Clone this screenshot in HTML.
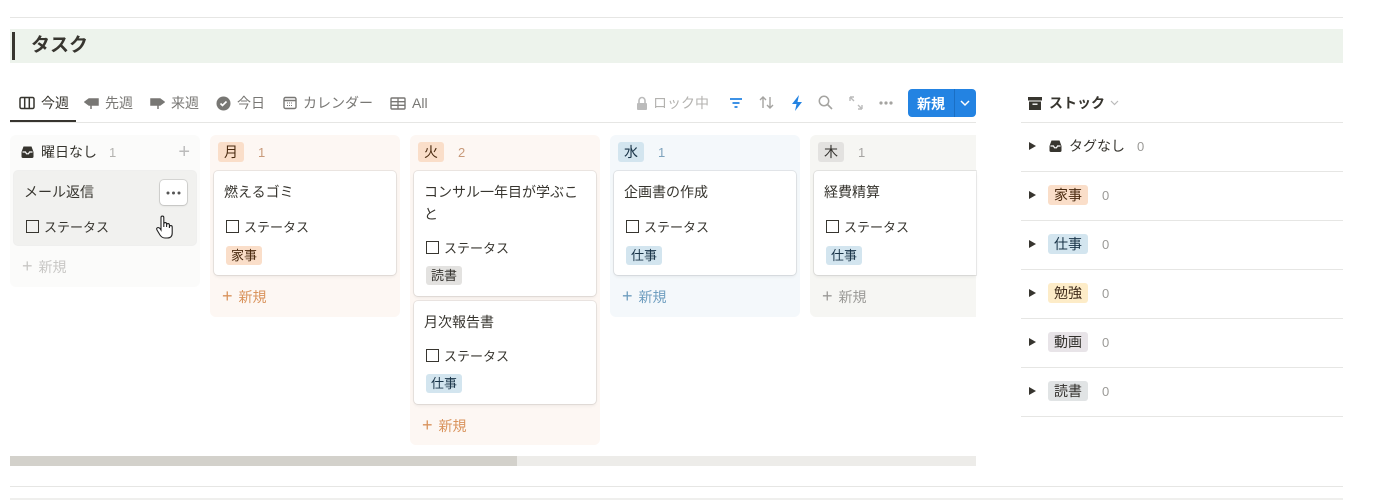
<!DOCTYPE html>
<html><head><meta charset="utf-8"><style>
*{box-sizing:border-box;margin:0;padding:0}
body{width:1386px;height:500px;background:#fff;font-family:"Liberation Sans","Noto Sans CJK JP",sans-serif;color:#37352f;position:relative;overflow:hidden;font-size:14px}
.a{position:absolute}
.hl{position:absolute;height:1px;background:#e6e6e4}
.tab{position:absolute;top:94px;font-size:14px;color:#787774;display:flex;align-items:center;gap:6px;height:18px}
.col{position:absolute;top:135px;width:190px;border-radius:6px}
.ch{position:absolute;top:142px;height:20px;display:flex;align-items:center;font-size:14px}
.pill{padding:0 6px;border-radius:3px;height:20px;line-height:20px;font-size:14px}
.card{position:absolute;left:4px;width:182px;background:#fff;border-radius:4px;box-shadow:0 0 0 1px rgba(15,15,15,.08),0 2px 3px rgba(15,15,15,.06)}
.ct{position:absolute;left:10px;top:10px;font-size:14px;line-height:22px;width:160px}
.st{position:absolute;left:12px;font-size:13px;display:flex;align-items:center;gap:5px}
.cb{width:13px;height:13px;border:1.5px solid #37352f;display:inline-block}
.tag{position:absolute;left:12px;font-size:13px;height:19px;line-height:19px;padding:0 5px;border-radius:3px}
.nw{position:absolute;left:12px;font-size:14px;display:flex;align-items:center;gap:6px}
.row{position:absolute;left:1029px;height:20px;display:flex;align-items:center;font-size:14px}
.tri{width:0;height:0;border-left:7px solid #37352f;border-top:4.5px solid transparent;border-bottom:4.5px solid transparent;margin-right:12px}
.rt{padding:0 6px;height:20px;line-height:20px;border-radius:3px;font-size:14px}
.n0{color:#9b9a97;margin-left:14px;font-size:13px}
</style></head><body>
<div class="hl" style="left:10px;top:17px;width:1333px"></div>
<div class="a" style="left:10px;top:29px;width:1333px;height:34px;background:#edf3ec"></div>
<div class="a" style="left:12px;top:32px;width:3px;height:28px;background:#37352f"></div>
<div class="a" style="left:31px;top:33px;font-size:19px;font-weight:bold;line-height:26px">タスク</div>

<div class="tab" style="left:19px;color:#37352f"><svg width="16" height="14" viewBox="0 0 16 14"><rect x="1" y="1.5" width="14" height="11" rx="1.5" fill="none" stroke="#37352f" stroke-width="1.5"/><path d="M5.7 1.5v11M10.3 1.5v11" stroke="#37352f" stroke-width="1.5"/></svg>今週</div>
<div class="a" style="left:10px;top:120px;width:66px;height:2px;background:#37352f"></div>
<div class="tab" style="left:84px"><svg width="15" height="14" viewBox="0 0 15 14"><path d="M1 6L5 3h9v6H5z M7 9v4" fill="#787774" stroke="#787774" stroke-width="1.5"/></svg>先週</div>
<div class="tab" style="left:150px"><svg width="15" height="14" viewBox="0 0 15 14"><path d="M14 6L10 3H1v6h9z M8 9v4" fill="#787774" stroke="#787774" stroke-width="1.5"/></svg>来週</div>
<div class="tab" style="left:216px"><svg width="15" height="15" viewBox="0 0 15 15"><circle cx="7.5" cy="7.5" r="7" fill="#787774"/><path d="M4.5 7.5l2 2 4-4" stroke="#fff" stroke-width="1.6" fill="none"/></svg>今日</div>
<div class="tab" style="left:283px"><svg width="14" height="14" viewBox="0 0 14 14"><rect x="1" y="1.5" width="12" height="11" rx="1.5" fill="none" stroke="#787774" stroke-width="1.4"/><path d="M1 4.5h12" stroke="#787774" stroke-width="1.5"/><path d="M4 7h6M4 9.5h6" stroke="#787774" stroke-width="1" stroke-dasharray="1 1"/></svg>カレンダー</div>
<div class="tab" style="left:390px"><svg width="16" height="13" viewBox="0 0 16 13"><rect x="1" y="1" width="14" height="11" rx="1" fill="none" stroke="#787774" stroke-width="1.4"/><path d="M1 4.7h14M1 8.3h14M8 1v11" stroke="#787774" stroke-width="1.3"/></svg>All</div>
<div class="hl" style="left:10px;top:122px;width:966px"></div>

<div class="tab" style="left:636px;color:#b3b2af;gap:5px"><svg width="12" height="15" viewBox="0 0 12 15"><path d="M3 7V4.5a3 3 0 016 0V7" fill="none" stroke="#bbb" stroke-width="1.6"/><rect x="1" y="7" width="10" height="7" rx="1" fill="#bbb"/></svg>ロック中</div>
<svg class="a" style="left:729px;top:97px" width="14" height="12" viewBox="0 0 14 12"><path d="M1 2h12M3.5 6h7M5.5 10h3" stroke="#2383e2" stroke-width="1.8"/></svg>
<svg class="a" style="left:759px;top:95px" width="15" height="15" viewBox="0 0 15 15"><path d="M4 13V2M1 5l3-3 3 3M11 2v11M8 10l3 3 3-3" stroke="#a5a4a1" stroke-width="1.4" fill="none"/></svg>
<svg class="a" style="left:791px;top:95px" width="12" height="16" viewBox="0 0 12 16"><path d="M8 0L1 9h4.5L4 16l7-9H6.5z" fill="#2383e2"/></svg>
<svg class="a" style="left:818px;top:95px" width="15" height="15" viewBox="0 0 15 15"><circle cx="6" cy="6" r="4.7" fill="none" stroke="#a5a4a1" stroke-width="1.5"/><path d="M9.5 9.5l4.5 4.5" stroke="#a5a4a1" stroke-width="1.6"/></svg>
<svg class="a" style="left:849px;top:96px" width="14" height="14" viewBox="0 0 14 14"><path d="M1 1l4 4M1 1v4M1 1h4M13 13l-4-4M13 13V9M13 13H9" stroke="#bbb" stroke-width="1.4" fill="none"/></svg>
<svg class="a" style="left:879px;top:101px" width="14" height="4" viewBox="0 0 14 4"><circle cx="2" cy="2" r="1.6" fill="#a5a4a1"/><circle cx="7" cy="2" r="1.6" fill="#a5a4a1"/><circle cx="12" cy="2" r="1.6" fill="#a5a4a1"/></svg>
<div class="a" style="left:908px;top:89px;width:68px;height:28px;background:#2383e2;border-radius:4px;color:#fff;font-size:14px;font-weight:bold"><span class="a" style="left:9px;top:5px">新規</span><div class="a" style="left:46px;top:0;width:1px;height:28px;background:#1a6fc4"></div><svg class="a" style="left:52px;top:11px" width="10" height="7" viewBox="0 0 10 7"><path d="M1 1l4 4 4-4" stroke="#fff" stroke-width="1.5" fill="none"/></svg></div>

<!-- columns -->
<div class="col" style="left:10px;height:152px;background:#fbfbfa"></div>
<div class="ch" style="left:20px;width:170px"><svg width="15" height="14" viewBox="0 0 15 14"><path d="M1.5 7L3.5 1.5h8L13.5 7v4.5q0 1.5-1.5 1.5H3q-1.5 0-1.5-1.5z" fill="#37352f"/><path d="M2.5 7h3l1 1.8h2L9.5 7h3" stroke="#fff" stroke-width="1.2" fill="none"/></svg><span style="margin-left:6px">曜日なし</span><span style="margin-left:12px;color:#b3b2af;font-size:13px">1</span><span style="margin-left:auto;color:#bbb;font-size:20px;font-weight:300">+</span></div>
<div class="card" style="left:14px;top:171px;height:74px;background:#f1f1ef;box-shadow:0 0 0 1px rgba(15,15,15,.05)">
 <div class="ct">メール返信</div>
 <div class="a" style="left:146px;top:9px;width:27px;height:25px;background:#fff;border-radius:4px;box-shadow:0 0 0 1px rgba(15,15,15,.12),0 1px 2px rgba(15,15,15,.1)"><svg class="a" style="left:6px;top:11px" width="15" height="4" viewBox="0 0 15 4"><circle cx="2" cy="2" r="1.5" fill="#555"/><circle cx="7.5" cy="2" r="1.5" fill="#555"/><circle cx="13" cy="2" r="1.5" fill="#555"/></svg></div>
 <div class="st" style="top:46px"><span class="cb"></span>ステータス</div>
 <svg class="a" style="left:142px;top:44px" width="18" height="26" viewBox="0 0 18 26"><path d="M5 2.5a1.4 1.4 0 012.8 0V12v-3a1.4 1.4 0 012.8 0v3-2a1.4 1.4 0 012.8 0v3-1a1.4 1.4 0 012.8 0v6q0 5-5 5H9q-3 0-5-3L1 15q-1-2 1-2.5 1 0 2 1l1 1.5z" fill="#fff" stroke="#222" stroke-width="1.1"/></svg>
</div>
<div class="nw" style="left:22px;top:256px;color:#c8c7c5"><span style="font-size:18px">+</span>新規</div>

<div class="col" style="left:210px;height:182px;background:#fdf7f3"></div>
<div class="ch" style="left:218px"><span class="pill" style="background:#fadec9;color:#49290e">月</span><span style="margin-left:14px;color:#c89a7a;font-size:13px">1</span></div>
<div class="card" style="left:214px;top:171px;height:104px">
 <div class="ct">燃えるゴミ</div>
 <div class="st" style="top:46px"><span class="cb"></span>ステータス</div>
 <div class="tag" style="top:75px;background:#fadec9;color:#49290e">家事</div>
</div>
<div class="nw" style="left:222px;top:286px;color:#d9935c"><span style="font-size:18px">+</span>新規</div>

<div class="col" style="left:410px;height:310px;background:#fdf7f3"></div>
<div class="ch" style="left:418px"><span class="pill" style="background:#fadec9;color:#49290e">火</span><span style="margin-left:14px;color:#c89a7a;font-size:13px">2</span></div>
<div class="card" style="left:414px;top:171px;height:125px">
 <div class="ct">コンサル一年目が学ぶこと</div>
 <div class="st" style="top:67px"><span class="cb"></span>ステータス</div>
 <div class="tag" style="top:95px;background:#e3e2e0;color:#32302c">読書</div>
</div>
<div class="card" style="left:414px;top:301px;height:103px">
 <div class="ct">月次報告書</div>
 <div class="st" style="top:45px"><span class="cb"></span>ステータス</div>
 <div class="tag" style="top:73px;background:#d3e5ef;color:#183347">仕事</div>
</div>
<div class="nw" style="left:422px;top:415px;color:#d9935c"><span style="font-size:18px">+</span>新規</div>

<div class="col" style="left:610px;height:182px;background:#f4f8fb"></div>
<div class="ch" style="left:618px"><span class="pill" style="background:#d3e5ef;color:#183347">水</span><span style="margin-left:14px;color:#7ea3bd;font-size:13px">1</span></div>
<div class="card" style="left:614px;top:171px;height:104px">
 <div class="ct">企画書の作成</div>
 <div class="st" style="top:46px"><span class="cb"></span>ステータス</div>
 <div class="tag" style="top:75px;background:#d3e5ef;color:#183347">仕事</div>
</div>
<div class="nw" style="left:622px;top:286px;color:#6f9ebf"><span style="font-size:18px">+</span>新規</div>

<div class="col" style="left:810px;height:182px;width:166px;background:#f6f6f3;border-radius:6px 0 0 6px"></div>
<div class="ch" style="left:818px"><span class="pill" style="background:#e3e2e0;color:#32302c">木</span><span style="margin-left:14px;color:#a5a4a1;font-size:13px">1</span></div>
<div class="card" style="left:814px;top:171px;height:104px;width:162px;border-radius:4px 0 0 4px">
 <div class="ct">経費精算</div>
 <div class="st" style="top:46px"><span class="cb"></span>ステータス</div>
 <div class="tag" style="top:75px;background:#d3e5ef;color:#183347">仕事</div>
</div>
<div class="nw" style="left:822px;top:286px;color:#9b9a97"><span style="font-size:18px">+</span>新規</div>

<div class="a" style="left:10px;top:456px;width:966px;height:10px;background:#edece9"></div>
<div class="a" style="left:10px;top:456px;width:507px;height:10px;background:#d3d1cb"></div>
<div class="hl" style="left:10px;top:486px;width:1333px"></div>
<div class="hl" style="left:10px;top:498px;width:1333px;height:2px;background:#efefed"></div>

<!-- right -->
<div class="a" style="left:1028px;top:94px;display:flex;align-items:center;font-weight:bold;font-size:14px;height:18px"><svg width="14" height="13" viewBox="0 0 14 13"><rect x="0" y="0" width="14" height="3.5" fill="#37352f"/><rect x="1" y="4.5" width="12" height="8.5" fill="#37352f"/><rect x="4.5" y="6.5" width="5" height="1.4" fill="#fff"/></svg><span style="margin-left:7px">ストック</span><svg style="margin-left:5px" width="9" height="6" viewBox="0 0 9 6"><path d="M1 1l3.5 3.5L8 1" stroke="#bbb" stroke-width="1.2" fill="none"/></svg></div>
<div class="hl" style="left:1021px;top:122px;width:322px"></div>
<div class="row" style="top:136px"><span class="tri"></span><svg width="15" height="14" viewBox="0 0 15 14"><path d="M1.5 7L3.5 1.5h8L13.5 7v4.5q0 1.5-1.5 1.5H3q-1.5 0-1.5-1.5z" fill="#37352f"/><path d="M2.5 7h3l1 1.8h2L9.5 7h3" stroke="#fff" stroke-width="1.2" fill="none"/></svg><span style="margin-left:6px">タグなし</span><span class="n0" style="margin-left:12px">0</span></div>
<div class="hl" style="left:1021px;top:171px;width:322px"></div>
<div class="row" style="top:185px"><span class="tri"></span><span class="rt" style="background:#fadec9;color:#49290e">家事</span><span class="n0">0</span></div>
<div class="hl" style="left:1021px;top:220px;width:322px"></div>
<div class="row" style="top:234px"><span class="tri"></span><span class="rt" style="background:#d3e5ef;color:#183347">仕事</span><span class="n0">0</span></div>
<div class="hl" style="left:1021px;top:269px;width:322px"></div>
<div class="row" style="top:283px"><span class="tri"></span><span class="rt" style="background:#fdecc8;color:#402c1b">勉強</span><span class="n0">0</span></div>
<div class="hl" style="left:1021px;top:318px;width:322px"></div>
<div class="row" style="top:332px"><span class="tri"></span><span class="rt" style="background:#e8e4e8;color:#32302c">動画</span><span class="n0">0</span></div>
<div class="hl" style="left:1021px;top:367px;width:322px"></div>
<div class="row" style="top:381px"><span class="tri"></span><span class="rt" style="background:#e1e4e5;color:#32302c">読書</span><span class="n0">0</span></div>
<div class="hl" style="left:1021px;top:416px;width:322px"></div>
</body></html>
